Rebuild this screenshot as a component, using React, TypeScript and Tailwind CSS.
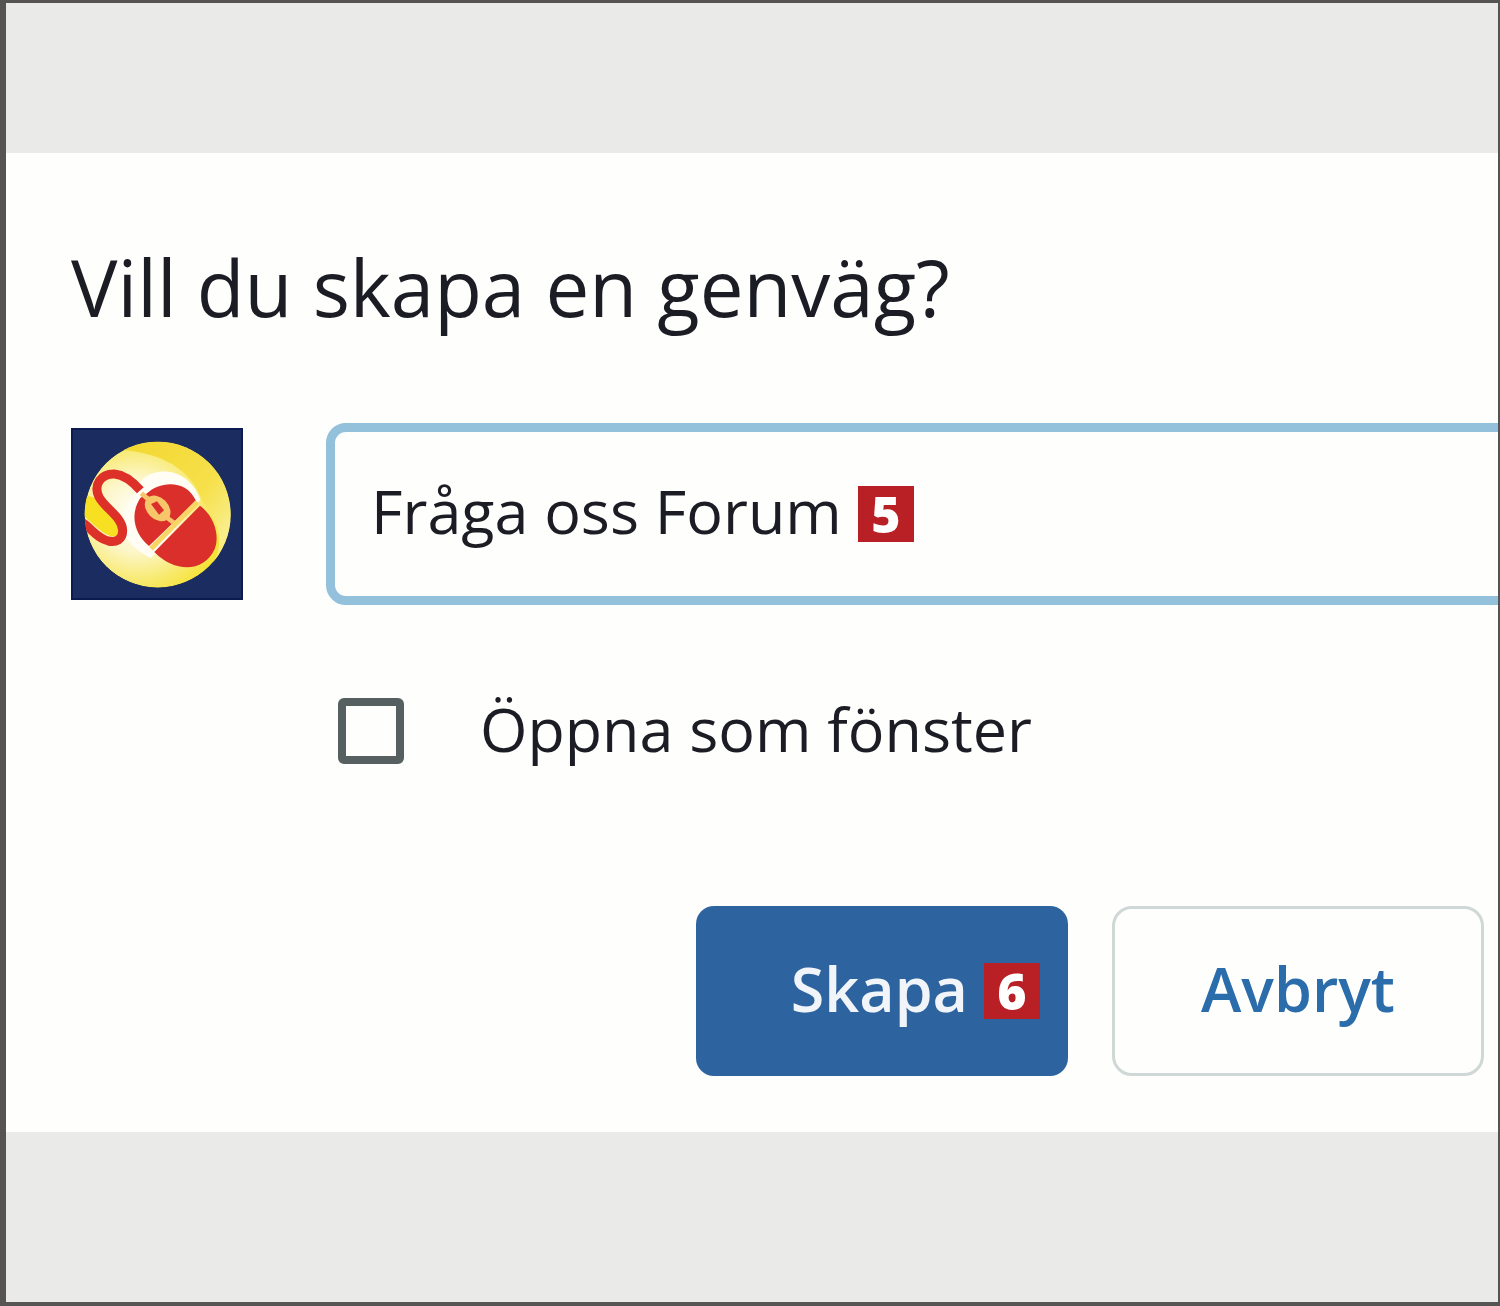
import { useState } from "react";

function StepBadge({ label }: { label: string }) {
  return (
    <span className="flex size-14 shrink-0 items-center justify-center bg-[#b92025] font-['Open_Sans',sans-serif] text-[50px] leading-none font-extrabold text-white">
      {label}
    </span>
  );
}

function MouseLogo() {
  return (
    <svg viewBox="0 0 516 516" className="size-43 shrink-0" role="img" aria-label="Forum">
      <defs>
        <radialGradient id="ball" cx="0.36" cy="0.5" r="0.64">
          <stop offset="0" stopColor="#ffffff" />
          <stop offset="0.4" stopColor="#fdf6c8" />
          <stop offset="0.7" stopColor="#f8ea72" />
          <stop offset="1" stopColor="#f5e126" />
        </radialGradient>
        <linearGradient id="shade" x1="0" y1="0" x2="1" y2="1">
          <stop offset="0" stopColor="#f3d72e" />
          <stop offset="0.55" stopColor="#f6e04a" />
          <stop offset="0.8" stopColor="#f9ee8c" />
          <stop offset="1" stopColor="#f8e92c" />
        </linearGradient>
        <clipPath id="disc">
          <circle cx="260" cy="260" r="219" />
        </clipPath>
      </defs>
      <rect width="516" height="516" fill="#1b2c60" />
      <rect x="3" y="3" width="510" height="510" fill="none" stroke="#0c1a52" strokeWidth="6" />
      <g clipPath="url(#disc)">
        <circle cx="260" cy="260" r="219" fill="url(#ball)" />
        <path d="M150 65C270 75 360 120 395 220C450 300 470 360 400 440L500 420V20H150Z" fill="url(#shade)" />
        <path d="M205 165C240 115 350 110 388 215L240 390C190 365 150 330 150 270Z" fill="#fffdf4" />
        <path d="M95 215C108 245 145 270 150 305C150 325 130 330 112 322C90 312 70 290 36 262V200Z" fill="#f7df22" />
        <path
          d="M208 187C180 155 155 140 130 138C90 137 66 170 84 207C101 240 155 268 155 308C155 335 135 344 112 339C80 331 65 306 32 282"
          fill="none"
          stroke="#dc3028"
          strokeWidth="27"
        />
      </g>
      <path d="M228 196C265 160 345 152 375 218L234 354C196 325 172 265 208 210Z" fill="#da2f2a" />
      <path d="M387 233C430 265 448 325 430 365C400 430 315 438 250 372Z" fill="#da2f2a" />
      <path d="M379 222L240 362" stroke="#f9d565" strokeWidth="15" />
      <path d="M211 196L240 220M281 264L308 284" stroke="#f8c66a" strokeWidth="14" />
      <ellipse cx="260" cy="241" rx="38" ry="26" transform="rotate(45 260 241)" fill="#f8c66a" stroke="#f8c66a" strokeWidth="12" />
      <path d="M240 228L258 220L279 247L264 260Z" fill="#da2f2a" />
    </svg>
  );
}

export default function App() {
  const [name, setName] = useState("Fråga oss Forum");
  const [asWindow, setAsWindow] = useState(false);

  return (
    <div className="flex min-h-screen flex-col overflow-hidden border-t-3 border-r-2 border-b-4 border-l-6 border-[#555453] bg-[#eaeae9] font-['Open_Sans',sans-serif] text-[#1c1c24]">
      <form
        className="mt-[150px] mb-[170px] flex flex-col bg-[#fefffd] pt-[90px] pb-14 pl-[65px]"
        onSubmit={(e) => e.preventDefault()}
      >
        <h1 className="text-[78px] leading-[88px] whitespace-nowrap">Vill du skapa en genväg?</h1>

        <div className="mt-[92px] flex items-center gap-[83px]">
          <MouseLogo />
          <div className="-mr-6 flex h-[182px] grow items-center gap-4 rounded-[20px] border-9 border-[#93c1dc] pl-9">
            <input
              type="text"
              aria-label="Namn på genväg"
              value={name}
              onChange={(e) => setName(e.target.value)}
              className="field-sizing-content bg-transparent pb-1.5 text-[61px] leading-20 outline-none"
            />
            <StepBadge label="5" />
          </div>
        </div>

        <label className="mt-[84px] ml-[267px] flex items-center gap-19 text-[61px] leading-20">
          <input
            type="checkbox"
            checked={asWindow}
            onChange={(e) => setAsWindow(e.target.checked)}
            className="size-[66px] shrink-0 appearance-none rounded-md border-8 border-[#566061] checked:bg-[#566061]"
          />
          <span className="pb-1">Öppna som fönster</span>
        </label>

        <div className="mt-[133px] mr-[14px] flex justify-end gap-11 text-[61px] leading-20 font-semibold">
          <button
            type="submit"
            className="flex h-[170px] w-[372px] items-center justify-end gap-4 rounded-[18px] bg-[#2d639f] pr-7 text-[#f1f5fa]"
          >
            <span className="pb-1">Skapa</span>
            <StepBadge label="6" />
          </button>
          <button
            type="button"
            className="h-[170px] w-[372px] rounded-[20px] border-3 border-[#cfd8d6] pb-1 text-[#2b6cab]"
          >
            Avbryt
          </button>
        </div>
      </form>
    </div>
  );
}
